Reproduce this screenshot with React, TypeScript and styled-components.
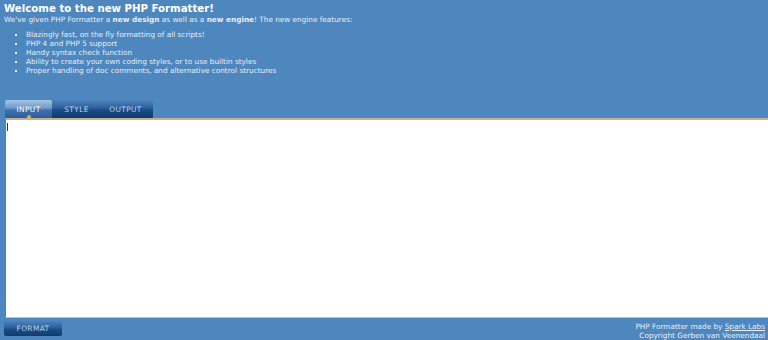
import styled, {createGlobalStyle} from 'styled-components';

const GlobalStyle = createGlobalStyle`
    html, body {
        margin: 0;
        padding: 0;
        background-color: #4e87bd;
        overflow: hidden;
    }
    body {
        font-family: "DejaVu Sans", Verdana, sans-serif;
        color: #e6eef7;
    }
`;

const Page = styled.div`
    box-sizing: border-box;
    width: 768px;
    padding: 2px 0 0 4px;
    display: flex;
    flex-direction: column;
    & > * {
        flex-shrink: 0;
    }
`;

const Title = styled.h1`
    margin: 0;
    font-size: 10.2px;
    line-height: 13px;
    font-weight: bold;
    color: #ffffff;
`;

const Intro = styled.p`
    margin: 0;
    font-size: 7.3px;
    line-height: 9px;
`;

const FeatureList = styled.ul`
    margin: 6px 0 0 0;
    padding: 0 0 0 22px;
    font-size: 7.3px;
    line-height: 9px;
    list-style: square;
`;

const TabBar = styled.div`
    margin: 25px 0 0 1px;
    width: 148px;
    height: 18px;
    display: flex;
    background: linear-gradient(#4f83bd 0%, #2b5f9c 45%, #1c4d89 55%, #0f3a70 100%);
    border-radius: 2px 2px 0 0;
`;

const Tab = styled.div<{ $active?: boolean }>`
    position: relative;
    width: ${({$active}) => ($active ? '47px' : '49px')};
    display: flex;
    align-items: center;
    justify-content: center;
    font-size: 7.4px;
    letter-spacing: 0.4px;
    color: ${({$active}) => ($active ? '#ffffff' : '#b8d2ee')};
    background: ${({$active}) =>
        $active ? 'linear-gradient(#a6c4e4 0%, #6e9acb 45%, #3f72ad 55%, #2a5e9b 100%)' : 'transparent'};
    border-radius: 2px 2px 0 0;
`;

const ActiveDot = styled.span`
    position: absolute;
    bottom: 0;
    left: 50%;
    width: 4px;
    height: 3px;
    margin-left: -2px;
    border-radius: 2px 2px 0 0;
    background-color: #e9a33c;
`;

const EditorWrap = styled.div`
    position: relative;
    margin-left: 1px;
    width: 780px;
`;

const Editor = styled.textarea`
    box-sizing: border-box;
    display: block;
    width: 100%;
    height: 200px;
    margin: 0;
    padding: 3px;
    border: none;
    border-top: 2px solid #c9b088;
    border-left: 1px solid #6c7c8c;
    border-bottom: 1px solid #a9c7e4;
    background-color: #ffffff;
    resize: none;
    outline: none;
    font-family: "DejaVu Sans Mono", monospace;
    font-size: 9px;
`;

const Caret = styled.span`
    position: absolute;
    left: 2px;
    top: 5px;
    width: 1px;
    height: 8px;
    background-color: #333333;
`;

const Footer = styled.div`
    margin-top: 2px;
    padding-right: 3px;
    display: flex;
    justify-content: space-between;
    align-items: flex-start;
`;

const FormatButton = styled.button`
    margin-top: 1px;
    width: 58px;
    height: 15px;
    padding: 0;
    border: none;
    border-radius: 2px;
    font-family: "DejaVu Sans", Verdana, sans-serif;
    font-size: 7.4px;
    letter-spacing: 0.4px;
    color: #b8d2ee;
    background: linear-gradient(#4f83bd 0%, #2b5f9c 45%, #1c4d89 55%, #0f3a70 100%);
`;

const Credits = styled.div`
    text-align: right;
    font-size: 7.3px;
    line-height: 9px;
    padding-top: 2px;
`;

const CreditLink = styled.a`
    color: #e6eef7;
    text-decoration: underline;
`;

const features = [
    'Blazingly fast, on the fly formatting of all scripts!',
    'PHP 4 and PHP 5 support',
    'Handy syntax check function',
    'Ability to create your own coding styles, or to use builtin styles',
    'Proper handling of doc comments, and alternative control structures',
];

export default function App() {
    return (
        <>
            <GlobalStyle/>
            <Page>
                <Title>Welcome to the new PHP Formatter!</Title>
                <Intro>
                    We've given PHP Formatter a <b>new design</b> as well as a <b>new engine</b>! The new engine
                    features:
                </Intro>
                <FeatureList>
                    {features.map((feature) => (
                        <li key={feature}>{feature}</li>
                    ))}
                </FeatureList>
                <TabBar>
                    <Tab $active>
                        INPUT
                        <ActiveDot/>
                    </Tab>
                    <Tab>STYLE</Tab>
                    <Tab>OUTPUT</Tab>
                </TabBar>
                <EditorWrap>
                    <Editor spellCheck={false}/>
                    <Caret/>
                </EditorWrap>
                <Footer>
                    <FormatButton>FORMAT</FormatButton>
                    <Credits>
                        PHP Formatter made by <CreditLink href="#">Spark Labs</CreditLink>
                        <br/>
                        Copyright Gerben van Veenendaal
                    </Credits>
                </Footer>
            </Page>
        </>
    );
}
